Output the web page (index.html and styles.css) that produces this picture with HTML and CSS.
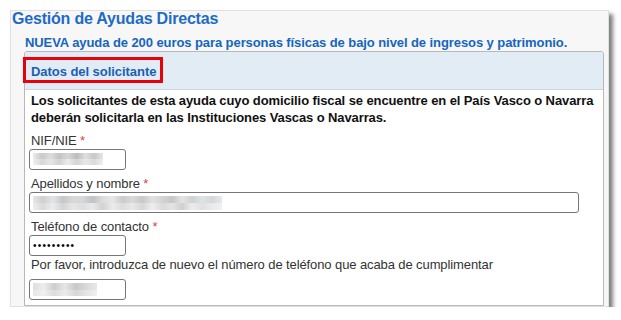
FILE: index.html
```html
<!DOCTYPE html>
<html lang="es">
<head>
    <meta charset="UTF-8">
    <meta name="viewport" content="width=device-width, initial-scale=1.0">
    <title>Gestión de Ayudas Directas</title>
    <link rel="stylesheet" href="styles.css">
</head>
<body>
    <div class="frame">
        <h1 class="title">Gestión de Ayudas Directas</h1>
        <p class="notice">NUEVA ayuda de 200 euros para personas físicas de bajo nivel de ingresos y patrimonio.</p>

        <div class="box">
            <div class="box-head">
                <span class="box-title">Datos del solicitante</span>
                <!-- marco rojo de resaltado -->
                <span class="highlight"></span>
            </div>
            <div class="box-body">
                <p class="note">Los solicitantes de esta ayuda cuyo domicilio fiscal se encuentre en el País Vasco o Navarra<br>deberán solicitarla en las Instituciones Vascas o Navarras.</p>

                <div class="field">
                    <label for="nif">NIF/NIE <span class="req">*</span></label>
                    <input type="text" id="nif" class="input short blur-nif" readonly>
                </div>

                <div class="field">
                    <label for="nombre">Apellidos y nombre <span class="req">*</span></label>
                    <input type="text" id="nombre" class="input long blur-name" readonly>
                </div>

                <div class="field tight">
                    <label for="telefono">Teléfono de contacto <span class="req">*</span></label>
                    <input type="password" id="telefono" class="input short secret" value="123456789" readonly>
                </div>

                <div class="field last">
                    <label for="telefono2">Por favor, introduzca de nuevo el número de teléfono que acaba de cumplimentar</label>
                    <input type="text" id="telefono2" class="input short blur-phone" readonly>
                </div>
            </div>
        </div>
    </div>
</body>
</html>
```

FILE: styles.css
```css
* {
    margin: 0;
    padding: 0;
    box-sizing: border-box;
}

body {
    font-family: "Liberation Sans", Arial, sans-serif;
    background-color: #fff;
}

.frame {
    margin: 10px 0 0 10px;
    width: 599px;
    height: 297px;
    padding-right: 4px;
    display: flex;
    flex-direction: column;
    background-color: #f7f7f7;
    border: 1px solid #e0e0e0;
    box-shadow: 4px 4px 4px rgba(0, 0, 0, 0.5);
}

.title {
    font-size: 16px;
    line-height: 16px;
    font-weight: bold;
    letter-spacing: -0.2px;
    color: #1e6bc6;
    padding-left: 1px;
}

.notice {
    margin: 8px 0 0 13px;
    padding-left: 1px;
    font-size: 13px;
    line-height: 16px;
    font-weight: bold;
    letter-spacing: -0.08px;
    color: #1565c0;
    white-space: nowrap;
}

.box {
    flex: 1;
    margin: 0 0 1px 13px;
    background-color: #fff;
    border: 1px solid #b8b8b8;
    border-radius: 3px 3px 0 0;
}

.box-head {
    position: relative;
    padding: 10px 5px 9px 6px;
    background-color: #e2ecf4;
    border-bottom: 1px solid #cdd6dd;
    border-radius: 2px 2px 0 0;
}

.box-title {
    font-size: 13px;
    line-height: 16px;
    font-weight: bold;
    letter-spacing: -0.05px;
    color: #1a5fb4;
}

.highlight {
    position: absolute;
    left: -2px;
    top: 5px;
    width: 140px;
    height: 26px;
    border: 3px solid #e8000b;
}

.box-body {
    padding: 2px 4px 0;
}

.note {
    margin-bottom: 6px;
    padding-left: 2px;
    font-size: 13px;
    line-height: 17px;
    font-weight: bold;
    letter-spacing: -0.1px;
    color: #111;
    white-space: nowrap;
}

.field {
    margin-bottom: 5px;
}

.field.tight {
    margin-bottom: 0;
}

.field label {
    display: block;
    padding-left: 2px;
    font-size: 13px;
    line-height: 17px;
    letter-spacing: -0.1px;
    color: #333;
    white-space: nowrap;
}

.field.last label {
    margin-bottom: 6px;
}

.req {
    color: #d9443c;
}

.input {
    display: block;
    height: 21px;
    padding: 0 2px;
    border: 1px solid #767676;
    border-radius: 3px;
    font-family: "Liberation Sans", Arial, sans-serif;
    font-size: 13px;
    color: #000;
    background-color: #fff;
    outline: none;
}

.input.short {
    width: 97px;
}

.input.long {
    width: 550px;
}

.input.secret {
    font-size: 10px;
    letter-spacing: 1.2px;
    padding-left: 3px;
}

/* datos pixelados */
.blur-nif {
    background:
        linear-gradient(90deg, #ececec, #c9c9c9, #dcdcdc, #c4c4c4, #d6d6d6, #bcbcbc, #dedede, #c8c8c8, #e6e6e6) no-repeat 3px 3px / 70px 6px,
        linear-gradient(90deg, #f0f0f0, #d8d8d8, #e6e6e6, #d2d2d2, #ebebeb, #d4d4d4, #e8e8e8, #dadada, #efefef) no-repeat 3px 9px / 70px 6px,
        #fff;
}

.blur-name {
    background:
        linear-gradient(90deg, #e6e6e6, #cfcfcf, #e2e6e8, #c6c6c6, #d8d8d8, #d3d8dc, #c2c2c2, #dcdcdc, #e4e8ea, #cbcbcb, #d9d9d9, #c8c8c8, #e1e1e1, #d0d4d6, #c6c6c6, #e4e4e4, #d1d1d1, #dde3e6, #d6d6d6, #e6eaec) no-repeat 3px 3px / 189px 7px,
        linear-gradient(90deg, #eeeeee, #dadada, #ececec, #d4d4d4, #e6e6e6, #dedede, #e9e9e9, #d2d2d2, #ebebeb, #dcdcdc, #e8e8e8, #d7d7d7, #eeeeee, #dadada, #e3e3e3, #d0d0d0, #ececec, #e0e0e0, #eaeaea, #f0f0f0) no-repeat 3px 10px / 189px 7px,
        #fff;
}

.blur-phone {
    background:
        linear-gradient(90deg, #dedede, #ededed, #cdcdcd, #e6e6e6, #c8c8c8, #d9d9d9, #e8e8e8) no-repeat 3px 3px / 64px 7px,
        linear-gradient(90deg, #e6e6e6, #f0f0f0, #dcdcdc, #ececec, #d7d7d7, #e4e4e4, #f0f0f0) no-repeat 3px 10px / 64px 6px,
        #fff;
}
```
